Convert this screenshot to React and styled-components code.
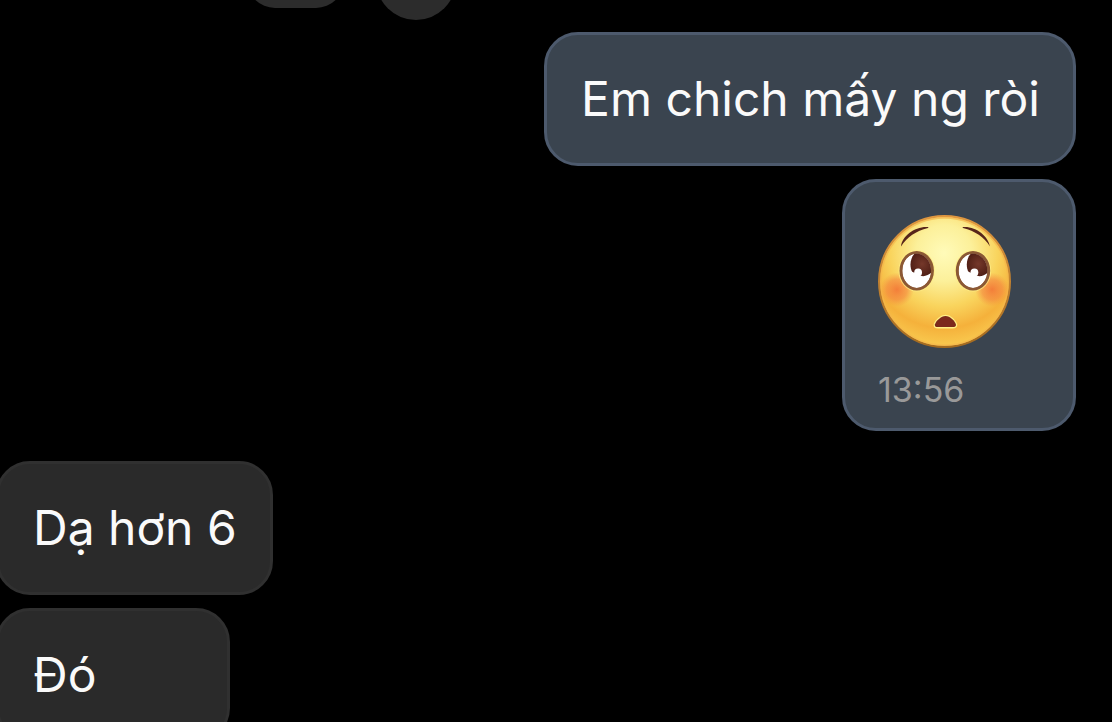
import React from "react";
import styled, { createGlobalStyle } from "styled-components";

const GlobalStyle = createGlobalStyle`
  *, *::before, *::after { box-sizing: border-box; }
  body {
    margin: 0;
    background: #000;
    color: #fafafa;
    font-family: Inter, "Noto Sans", sans-serif;
  }
`;

const Chat = styled.main`
  display: flex;
  flex-direction: column;
  height: 100vh;
  overflow: hidden;
`;

const ReactionRow = styled.div`
  display: flex;
  align-items: flex-end;
  gap: 32px;
  height: 20px;
  padding-left: 247px;
  flex-shrink: 0;
`;

const ReactionPill = styled.div`
  width: 97px;
  height: 56px;
  margin-bottom: 12px;
  border-radius: 28px;
  background: #2c2c2c;
`;

const ReactionCircle = styled.div`
  width: 80px;
  height: 80px;
  border-radius: 50%;
  background: #2c2c2c;
`;

const Group = styled.section`
  display: flex;
  flex-direction: column;
  flex-shrink: 0;
  gap: 13px;
  align-items: ${(p) => (p.$mine ? "flex-end" : "flex-start")};
  margin: ${(p) => (p.$mine ? "12px 36px 30px 0" : "0 0 0 -4px")};
`;

const Bubble = styled.article`
  min-width: 234px;
  padding: 33px;
  border: 3px solid ${(p) => (p.$mine ? "#4d5a6d" : "#303030")};
  border-radius: 34px;
  background: ${(p) => (p.$mine ? "#3a444f" : "#2a2a2a")};
`;

const Message = styled.p`
  margin: 0;
  padding: 1px 0 1px 1px;
  font-size: 48px;
  line-height: 60px;
  white-space: nowrap;
`;

const Time = styled.time`
  display: block;
  margin-top: 22px;
  font-size: 34px;
  line-height: 40px;
  color: #999;
  margin-bottom: -15px;
`;

const Face = styled.svg`
  display: block;
  width: 133px;
  height: 133px;
`;

function Eye({ cx, id }) {
  return (
    <g transform={`translate(${cx} 55.7)`}>
      <ellipse rx="18.2" ry="20.8" fill="#ffed86" opacity=".75" />
      <ellipse rx="17.2" ry="19.8" fill="#8b5834" />
      <clipPath id={id}>
        <ellipse rx="14.4" ry="17.2" />
      </clipPath>
      <g clipPath={`url(#${id})`}>
        <ellipse rx="14.4" ry="17.2" fill="#fff" />
        <path d="M0-19C-6-15-8-5-4.5 1L4 5C8 6.5 13 4 17 0V-19Z" fill="url(#iris)" />
        <circle cx="1.4" cy="1.8" r="3.9" fill="#fff" />
      </g>
    </g>
  );
}

function FlushedFace() {
  return (
    <Face viewBox="0 0 133 133" role="img" aria-label="Flushed face looking up">
      <defs>
        <radialGradient id="skin" gradientUnits="userSpaceOnUse" cx="66" cy="38" r="94">
          <stop offset="0" stopColor="#fffbb9" />
          <stop offset=".3" stopColor="#fcf09a" />
          <stop offset=".57" stopColor="#f9d45d" />
          <stop offset=".8" stopColor="#f5b13b" />
          <stop offset="1" stopColor="#f9cb50" />
        </radialGradient>
        <linearGradient id="rim" x1="0" y1="0" x2="0" y2="1">
          <stop offset="0" stopColor="#df9740" />
          <stop offset="1" stopColor="#a46b20" />
        </linearGradient>
        <radialGradient id="blush">
          <stop offset="0" stopColor="#f26b33" stopOpacity=".8" />
          <stop offset=".6" stopColor="#f47c3c" stopOpacity=".55" />
          <stop offset="1" stopColor="#f58b40" stopOpacity="0" />
        </radialGradient>
        <radialGradient id="iris">
          <stop offset="0" stopColor="#75382a" />
          <stop offset="1" stopColor="#512016" />
        </radialGradient>
        <clipPath id="head">
          <circle cx="66.5" cy="66.5" r="65" />
        </clipPath>
      </defs>
      <circle cx="66.5" cy="66.5" r="65.4" fill="url(#skin)" stroke="url(#rim)" strokeWidth="2.2" />
      <circle cx="66.5" cy="66.5" r="63.6" fill="none" stroke="#f5b74b" strokeWidth="1.6" opacity=".7" />
      <g clipPath="url(#head)">
        <circle cx="19" cy="74.5" r="17" fill="url(#blush)" />
        <circle cx="114" cy="74.5" r="17" fill="url(#blush)" />
      </g>
      <path d="M23 31.5C24 21 37 11 50 12C50.5 12 50.5 13 50 13C38 16 29 22 23 31.5Z" fill="#57251a" />
      <path d="M112 31.5C110 21 98 11 85 12C84.5 12 84.5 13 85 13C97 16 106 22 112 31.5Z" fill="#57251a" />
      <Eye cx={38.7} id="eye-left" />
      <Eye cx={95} id="eye-right" />
      <path
        d="M67.5 101C72 101 77 106 78 109.5C78 111.7 77 112.1 74.5 112.1H60C57.5 112.1 56.5 111.5 57 109.2C58 106 63 101 67.5 101Z"
        fill="#7c291c"
        stroke="#ffef86"
        strokeWidth="2.6"
        paintOrder="stroke"
      />
    </Face>
  );
}

export default function App() {
  return (
    <Chat>
      <GlobalStyle />
      <ReactionRow>
        <ReactionPill />
        <ReactionCircle />
      </ReactionRow>
      <Group $mine>
        <Bubble $mine>
          <Message>Em chich mấy ng ròi</Message>
        </Bubble>
        <Bubble $mine>
          <FlushedFace />
          <Time dateTime="13:56">13:56</Time>
        </Bubble>
      </Group>
      <Group>
        <Bubble>
          <Message>Dạ hơn 6</Message>
        </Bubble>
        <Bubble>
          <Message>Đó</Message>
        </Bubble>
      </Group>
    </Chat>
  );
}
